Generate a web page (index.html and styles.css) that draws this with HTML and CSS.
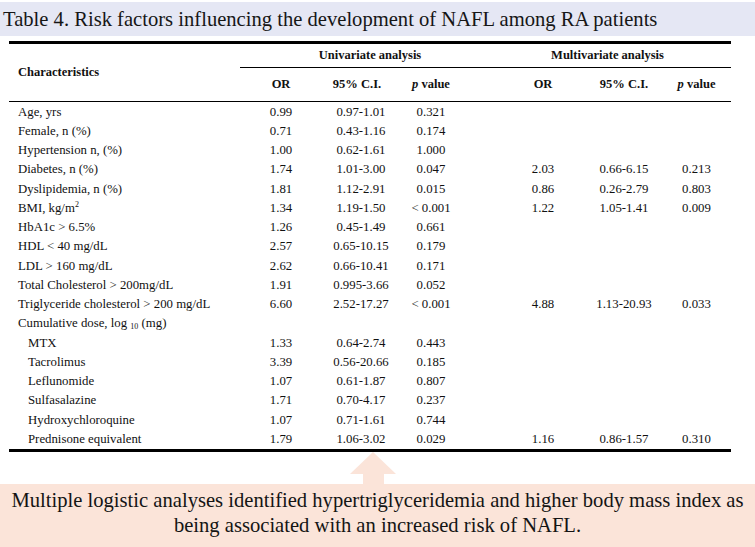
FILE: index.html
```html
<!DOCTYPE html>
<html>
<head>
<meta charset="utf-8">
<link rel="stylesheet" href="styles.css">
</head>
<body>
<div class="page">
  <div class="title">Table 4. Risk factors influencing the development of NAFL among RA patients</div>
  <table class="risk">
    <colgroup>
      <col class="c-label"><col class="c-or"><col class="c-ci"><col class="c-p"><col class="c-gap"><col class="c-or2"><col class="c-ci2"><col class="c-p2">
    </colgroup>
    <thead>
      <tr class="h1">
        <th rowspan="2" class="label">Characteristics</th>
        <th colspan="4" class="group uni">Univariate analysis</th>
        <th colspan="3" class="group multi">Multivariate analysis</th>
      </tr>
      <tr class="h2">
        <th>OR</th><th>95% C.I.</th><th><i>p</i> value</th><th></th><th>OR</th><th>95% C.I.</th><th><i>p</i> value</th>
      </tr>
    </thead>
    <tbody>
      <tr><td class="label">Age, yrs</td><td>0.99</td><td>0.97-1.01</td><td>0.321</td><td></td><td></td><td></td><td></td></tr>
      <tr><td class="label">Female, n (%)</td><td>0.71</td><td>0.43-1.16</td><td>0.174</td><td></td><td></td><td></td><td></td></tr>
      <tr><td class="label">Hypertension n, (%)</td><td>1.00</td><td>0.62-1.61</td><td>1.000</td><td></td><td></td><td></td><td></td></tr>
      <tr><td class="label">Diabetes, n (%)</td><td>1.74</td><td>1.01-3.00</td><td>0.047</td><td></td><td>2.03</td><td>0.66-6.15</td><td>0.213</td></tr>
      <tr><td class="label">Dyslipidemia, n (%)</td><td>1.81</td><td>1.12-2.91</td><td>0.015</td><td></td><td>0.86</td><td>0.26-2.79</td><td>0.803</td></tr>
      <tr><td class="label">BMI, kg/m<sup>2</sup></td><td>1.34</td><td>1.19-1.50</td><td>&lt; 0.001</td><td></td><td>1.22</td><td>1.05-1.41</td><td>0.009</td></tr>
      <tr><td class="label">HbA1c &gt; 6.5%</td><td>1.26</td><td>0.45-1.49</td><td>0.661</td><td></td><td></td><td></td><td></td></tr>
      <tr><td class="label">HDL &lt; 40 mg/dL</td><td>2.57</td><td>0.65-10.15</td><td>0.179</td><td></td><td></td><td></td><td></td></tr>
      <tr><td class="label">LDL &gt; 160 mg/dL</td><td>2.62</td><td>0.66-10.41</td><td>0.171</td><td></td><td></td><td></td><td></td></tr>
      <tr><td class="label">Total Cholesterol &gt; 200mg/dL</td><td>1.91</td><td>0.995-3.66</td><td>0.052</td><td></td><td></td><td></td><td></td></tr>
      <tr><td class="label">Triglyceride cholesterol &gt; 200 mg/dL</td><td>6.60</td><td>2.52-17.27</td><td>&lt; 0.001</td><td></td><td>4.88</td><td>1.13-20.93</td><td>0.033</td></tr>
      <tr><td class="label">Cumulative dose, log <sub>10</sub> (mg)</td><td></td><td></td><td></td><td></td><td></td><td></td><td></td></tr>
      <tr><td class="label sub">MTX</td><td>1.33</td><td>0.64-2.74</td><td>0.443</td><td></td><td></td><td></td><td></td></tr>
      <tr><td class="label sub">Tacrolimus</td><td>3.39</td><td>0.56-20.66</td><td>0.185</td><td></td><td></td><td></td><td></td></tr>
      <tr><td class="label sub">Leflunomide</td><td>1.07</td><td>0.61-1.87</td><td>0.807</td><td></td><td></td><td></td><td></td></tr>
      <tr><td class="label sub">Sulfasalazine</td><td>1.71</td><td>0.70-4.17</td><td>0.237</td><td></td><td></td><td></td><td></td></tr>
      <tr><td class="label sub">Hydroxychloroquine</td><td>1.07</td><td>0.71-1.61</td><td>0.744</td><td></td><td></td><td></td><td></td></tr>
      <tr class="last"><td class="label sub">Prednisone equivalent</td><td>1.79</td><td>1.06-3.02</td><td>0.029</td><td></td><td>1.16</td><td>0.86-1.57</td><td>0.310</td></tr>
    </tbody>
  </table>
  <div class="callout">
    <div class="arrow">
      <div class="arrow-head"></div>
      <div class="arrow-shaft"></div>
    </div>
    <div class="box">Multiple logistic analyses identified hypertriglyceridemia and higher body mass index as<br>being associated with an increased risk of NAFL.</div>
  </div>
</div>
</body>
</html>
```

FILE: styles.css
```css
html, body {
  margin: 0;
  padding: 0;
  background: #ffffff;
}
.page {
  width: 755px;
  height: 547px;
  padding-top: 2px;
  box-sizing: border-box;
  font-family: "Liberation Serif", "Times New Roman", serif;
  color: #111111;
  display: flex;
  flex-direction: column;
  overflow: hidden;
}
.title {
  background: #e5e7f4;
  height: 34px;
  line-height: 35px;
  font-size: 20.6px;
  padding-left: 3px;
  color: #161616;
  white-space: nowrap;
}
.risk {
  margin: 5px 0 0 9px;
  width: 722px;
  border-collapse: collapse;
  table-layout: fixed;
  font-size: 12.8px;
  border-top: 3px solid #000;
  border-bottom: 3px solid #000;
}
.c-label { width: 231px; }
.c-or { width: 82px; }
.c-ci { width: 78px; }
.c-p { width: 62px; }
.c-gap { width: 38px; }
.c-or2 { width: 86px; }
.c-ci2 { width: 76px; }
.c-p2 { width: 69px; }
.risk th {
  font-weight: bold;
  font-size: 12.5px;
  text-align: center;
  padding: 0;
}
.risk th i { font-weight: bold; }
.h1 th { height: 23px; }
.h1 .group { border-bottom: 1px solid #000; }
.h1 .multi { padding-right: 16px; }
.h2 th { height: 33px; border-bottom: 1px solid #000; }
.h2 th:nth-child(2) { padding-right: 8px; }
.risk th.label {
  text-align: left;
  padding-left: 9px;
  border-bottom: 1px solid #000;
}
.risk td {
  height: 19.25px;
  padding: 0;
  text-align: center;
  white-space: nowrap;
  line-height: 14px;
}
.risk td.label {
  text-align: left;
  padding-left: 9px;
}
.risk td.label.sub { padding-left: 19px; }
.risk sup { font-size: 8px; vertical-align: 5px; line-height: 0; }
.risk sub { font-size: 8px; vertical-align: -2px; line-height: 0; }
.callout {
  margin-top: auto;
  display: flex;
  flex-direction: column;
  align-items: stretch;
}
.arrow {
  display: flex;
  flex-direction: column;
  align-items: center;
  margin-left: -9px;
}
.arrow-head {
  width: 0;
  height: 0;
  border-left: 23px solid transparent;
  border-right: 23px solid transparent;
  border-bottom: 22px solid #fbe4d9;
}
.arrow-shaft {
  width: 21px;
  height: 10px;
  background: #fbe4d9;
}
.box {
  background: #fbe4d9;
  height: 63px;
  box-sizing: border-box;
  padding-top: 4px;
  font-size: 20.6px;
  line-height: 25px;
  text-align: center;
  color: #141414;
  white-space: nowrap;
}
```
